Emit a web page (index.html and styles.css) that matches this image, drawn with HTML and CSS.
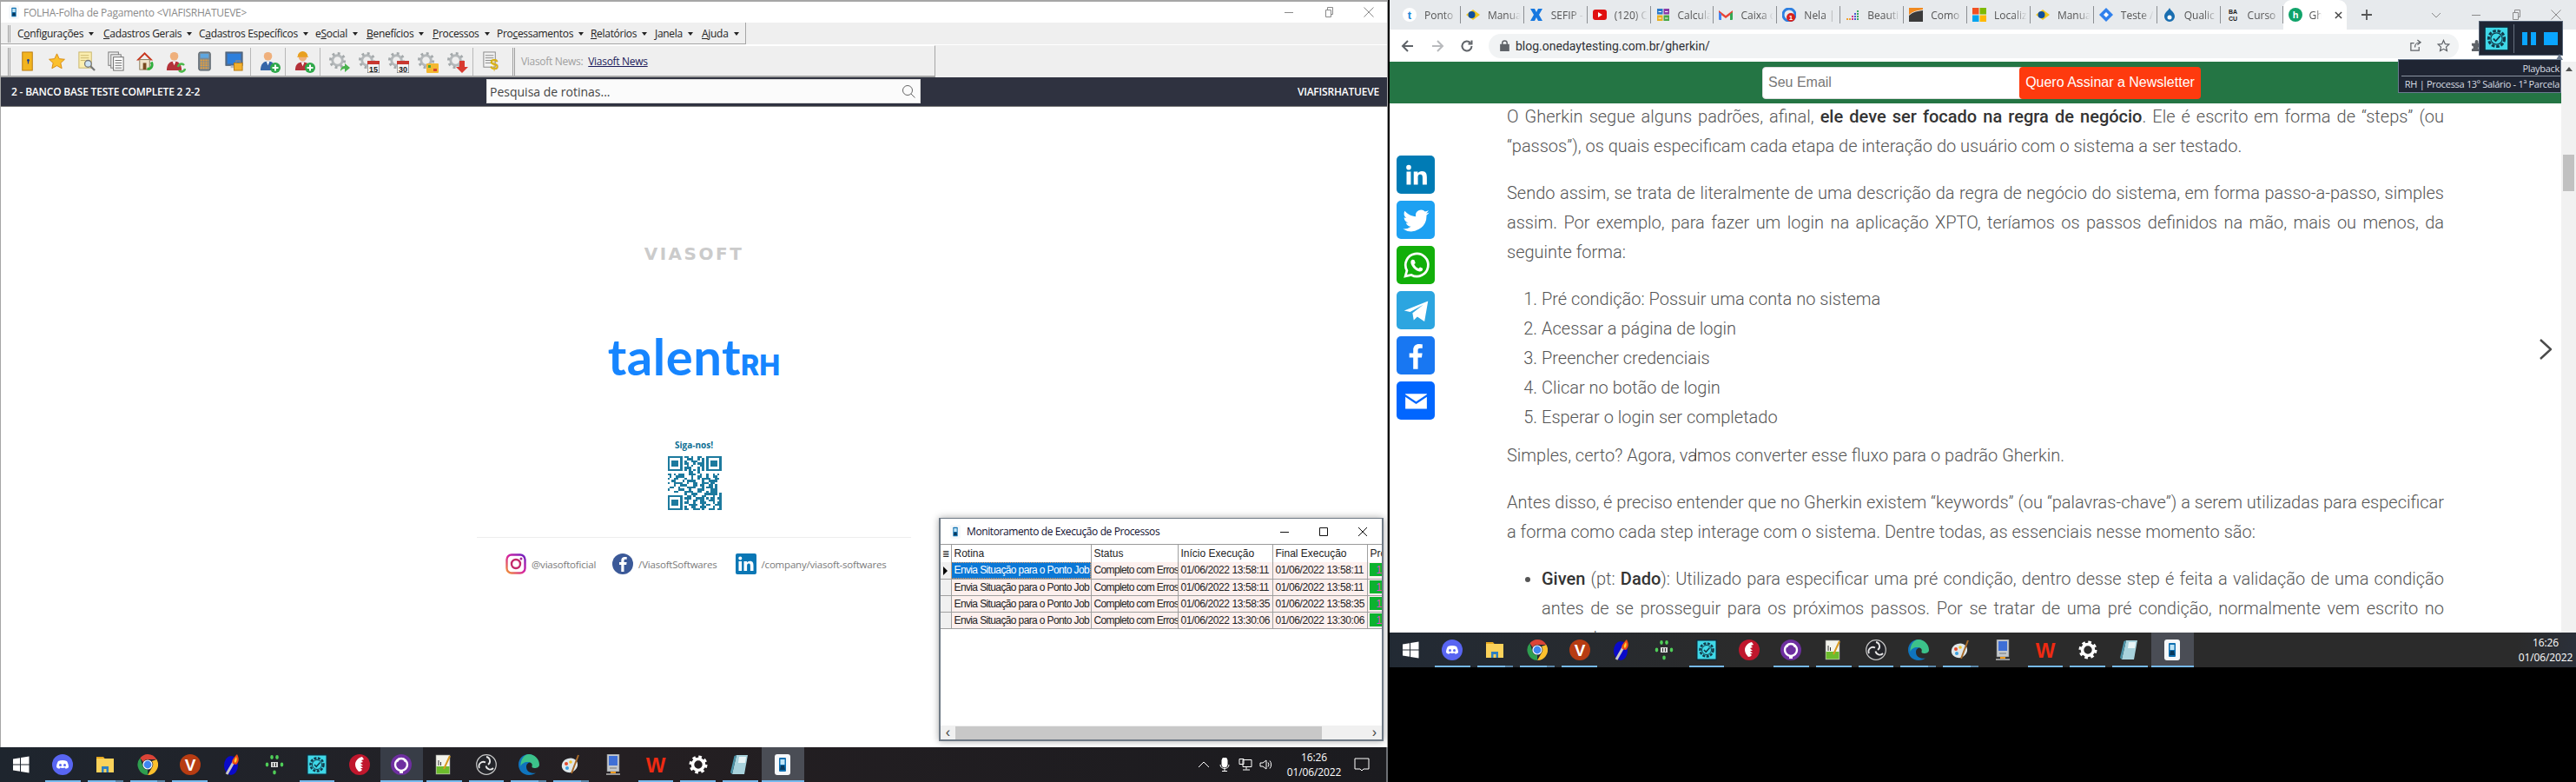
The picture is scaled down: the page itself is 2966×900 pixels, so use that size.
FILE: index.html
```html
<!DOCTYPE html>
<html lang="pt-BR">
<head>
<meta charset="utf-8">
<title>Desktop</title>
<link rel="stylesheet" href="styles.css">
</head>
<body>
<svg class="defs" aria-hidden="true">
  <symbol id="i-win" viewBox="0 0 24 24"><path fill="#fff" d="M3 5.500l8-1.200v7.200H3zM12 4.100l9.500-1.500v8.900H12zM3 12.500h8v7.200l-8-1.200zM12 12.500h9.500v8.900L12 19.900z"/></symbol>
  <symbol id="i-discord" viewBox="0 0 24 24"><circle cx="12" cy="12" r="12" fill="#5865f2"/><path fill="#fff" d="M7 8c3-1.400 7-1.400 10 0 1.400 2.200 2 4.600 2 7-1 1-2.200 1.500-3.400 1.800l-.8-1.300c-1.800.5-3.800.5-5.600 0l-.8 1.300C7.200 16.500 6 16 5 15c0-2.400.6-4.800 2-7z"/><circle cx="9.500" cy="12.500" r="1.500" fill="#5865f2"/><circle cx="14.500" cy="12.500" r="1.500" fill="#5865f2"/></symbol>
  <symbol id="i-folder" viewBox="0 0 24 24"><path fill="#e8a91e" d="M2 3h8l2 2.500H2z"/><rect x="2" y="5" width="20" height="16" fill="#fbd25a"/><path fill="#2e7fc2" d="M8 21v-7h8v7h-2.500v-4h-3v4z"/></symbol>
  <symbol id="i-chrome" viewBox="0 0 24 24"><path fill="#db4437" d="M12 0a12 12 0 0 1 10.400 6H12a6 6 0 0 0-5.200 3L3.400 4.200A12 12 0 0 1 12 0z"/><path fill="#fbc02d" d="M22.400 6A12 12 0 0 1 12 24l5.200-9A6 6 0 0 0 16.800 8z"/><path fill="#2e9e4f" d="M3.400 4.200L6.800 15a6 6 0 0 0 5.200 3l0 6A12 12 0 0 1 3.400 4.200z"/><circle cx="12" cy="12" r="5.600" fill="#fff"/><circle cx="12" cy="12" r="4.400" fill="#3f86f0"/></symbol>
  <symbol id="i-v" viewBox="0 0 24 24"><circle cx="12" cy="12" r="12" fill="#b73c12"/><text x="12" y="19" text-anchor="middle" class="sv-b" font-size="19" fill="#fff">V</text></symbol>
  <symbol id="i-torch" viewBox="0 0 24 24"><ellipse cx="11" cy="13" rx="8" ry="11" fill="#0a0ac8"/><path stroke="#c8c8c8" stroke-width="3" d="M6 23l8-14"/><path fill="#f04a16" d="M13 11c-2-3 0-6 5-11 2 4 3 8-1 12z"/><path fill="#ffd02e" d="M15 9c-1-2 1-4 2-6 1 2 1 5-1 7z"/></symbol>
  <symbol id="i-dots" viewBox="0 0 24 24"><rect x="8" y="9" width="8" height="6" fill="#d8d8d8"/><path fill="#333" d="M10 10h1v4h-1zM13 10h1v4h-1z"/><g fill="#4fce58"><ellipse cx="9" cy="3.500" rx="1.800" ry="2.400"/><ellipse cx="15" cy="3.500" rx="1.800" ry="2.400"/><ellipse cx="3.500" cy="12" rx="1.800" ry="2.400"/><ellipse cx="20.500" cy="12" rx="1.800" ry="2.400"/><ellipse cx="12" cy="21" rx="1.800" ry="2.400"/></g></symbol>
  <symbol id="i-check" viewBox="0 0 24 24"><rect width="24" height="24" fill="#102a38"/><rect x="1.500" y="1.500" width="21" height="21" fill="#3fd8e8"/><circle cx="12" cy="12" r="7.500" fill="none" stroke="#123a4a" stroke-width="2.500" stroke-dasharray="3 1.500"/><circle cx="12" cy="12" r="5.500" fill="none" stroke="#123a4a" stroke-width="1"/><path fill="none" stroke="#123a4a" stroke-width="1.500" d="M9 12l2.200 2.300L15.500 9.500"/></symbol>
  <symbol id="i-delphi" viewBox="0 0 24 24"><circle cx="12" cy="12" r="12" fill="#c0172d"/><path fill="#fff" d="M15 3c-5 1-8 5-8 9 0 3 2 6 4 8 2 0 3-1 4-2l-2-2 3 0-3-3 3 0-3-3 3-1-2-2 3-1z"/></symbol>
  <symbol id="i-git" viewBox="0 0 24 24"><circle cx="12" cy="12" r="12" fill="#6e2fa0"/><circle cx="12" cy="12" r="7" fill="none" stroke="#fff" stroke-width="2.400"/><path fill="#fff" d="M10 18h4v4h-4zM6.500 6l3 1.500-2 2zM17.500 6l-3 1.500 2 2z"/></symbol>
  <symbol id="i-notepad" viewBox="0 0 24 24"><rect x="3" y="1" width="16" height="22" fill="#f4f4ec" stroke="#888" stroke-width=".6"/><rect x="3.500" y="14" width="15" height="8.500" fill="#6cbc2c"/><path stroke="#333" stroke-width="1" d="M6 7v6M8.500 9v4"/><path stroke="#d89a20" stroke-width="2" d="M12 17l7-15"/></symbol>
  <symbol id="i-obs" viewBox="0 0 24 24"><circle cx="12" cy="12" r="11.300" fill="#24252a" stroke="#c8c8c8" stroke-width="1.200"/><g fill="none" stroke="#e8e8e8" stroke-width="1.800"><path d="M12 3a5 5 0 0 1 2 9"/><path d="M20 16a5 5 0 0 1-8.500-2.500"/><path d="M4 16a5 5 0 0 1 7-6.500"/></g></symbol>
  <symbol id="i-edge" viewBox="0 0 24 24"><path fill="#0f74bd" d="M12 0C5 0 0 5.500 0 12s5 12 12 12c3.500 0 6-1 8-2.500-5 1-11-1-11-7 0-3 2-5 5-5H22C21 4 17 0 12 0z"/><path fill="#3cc28a" d="M12 0c6 0 12 5 12 12 0 3-3 4-5.500 4-2 0-3.500-1-3-2 1-3-1-5-5-5-4 0-7 2-8 5C2 6 7 0 12 0z"/></symbol>
  <symbol id="i-paint" viewBox="0 0 24 24"><path fill="#dfe7ea" d="M9 5c6-2 12 2 11 8-1 5-6 9-11 8-5-1-8-5-7-9 .5-3 3-6 7-7z"/><circle cx="7" cy="11" r="2" fill="#e3492c"/><circle cx="8" cy="16" r="2" fill="#3aa0e0"/><circle cx="12" cy="9" r="1.800" fill="#f0c22c"/><path stroke="#a86a28" stroke-width="2" d="M21 1l-8 21"/></symbol>
  <symbol id="i-pc" viewBox="0 0 24 24"><rect x="5" y="0" width="14" height="20" fill="#c4c8cc" stroke="#777" stroke-width=".6"/><rect x="7" y="2" width="10" height="11" fill="#3f6fd6"/><path stroke="#777" d="M8 16h8"/><path fill="#f09a1c" d="M9 20h6v2H9z"/><path stroke="#bbb" stroke-width="1.500" d="M4 23h16"/></symbol>
  <symbol id="i-wps" viewBox="0 0 24 24"><text x="12" y="21" text-anchor="middle" class="sv-b" font-size="24" fill="#ee2a12">W</text></symbol>
  <symbol id="i-set" viewBox="0 0 24 24"><circle cx="12" cy="12" r="6.500" fill="none" stroke="#fff" stroke-width="3.600"/><circle cx="12" cy="12" r="9" fill="none" stroke="#fff" stroke-width="3" stroke-dasharray="3.600 3.470"/></symbol>
  <symbol id="i-book" viewBox="0 0 24 24"><path fill="#a8d2dc" d="M8 1h13l-4 22H3z"/><path fill="#4b93a8" d="M3 23L8 1 5.500 2 1 21z"/><path fill="#e8f4f6" d="M11 3h8l-1 7h-8z"/></symbol>
  <symbol id="i-app" viewBox="0 0 24 24"><rect x="3" width="18" height="24" rx="3" fill="#f6f8fa"/><rect x="8" y="4" width="8" height="16" rx="1" fill="#0e6fb0"/><rect x="9.500" y="6" width="5" height="6" fill="#bfe4f6"/><path fill="#07385c" d="M10 13h4l1 5H9z"/></symbol>
  <symbol id="i-gear" viewBox="0 0 24 24"><circle cx="11" cy="11" r="6" fill="none" stroke="#b4b8ba" stroke-width="3"/><circle cx="11" cy="11" r="8.500" fill="none" stroke="#a4a9ab" stroke-width="3" stroke-dasharray="3 3.670"/><circle cx="11" cy="11" r="2.500" fill="#efefef"/></symbol>
  <symbol id="i-person" viewBox="0 0 24 24"><circle cx="11" cy="6" r="5" fill="#efb07c"/><path fill="#b4323a" d="M2 23c0-8 4-11 9-11s9 3 9 11z"/><path fill="#fff" d="M9 12h4l-2 5z"/></symbol>
  <symbol id="i-person-b" viewBox="0 0 24 24"><circle cx="11" cy="6" r="5" fill="#efb07c"/><path fill="#3566a8" d="M2 23c0-8 4-11 9-11s9 3 9 11z"/><path fill="#fff" d="M9 12h4l-2 5z"/></symbol>
  <symbol id="i-person-h" viewBox="0 0 24 24"><circle cx="11" cy="7" r="5" fill="#efb07c"/><path fill="#e8a020" d="M5 6a6 6 0 0 1 12 0l1 1H4z"/><path fill="#b4323a" d="M2 23c0-8 4-10 9-10s9 2 9 10z"/><path fill="#fff" d="M9 13h4l-2 5z"/></symbol>
</svg>

<div class="screen">
  <section class="left">
    <div class="app">
      <header class="app-title">
        <svg class="ic16"><use href="#i-app"/></svg>
        <span class="app-name">FOLHA-Folha de Pagamento &lt;VIAFISRHATUEVE&gt;</span>
        <div class="win-ctrl">
          <svg class="wc" viewBox="0 0 14 14"><path d="M2 7.500h10"/></svg>
          <svg class="wc" viewBox="0 0 14 14"><path d="M3.500 4.500h6v8h-6zM5.500 4.500v-3h6v8h-2"/></svg>
          <svg class="wc" viewBox="0 0 14 14"><path d="M1.500 1.500l11 11M12.500 1.500l-11 11"/></svg>
        </div>
      </header>
      <nav class="menubar">
        <span class="grip"></span>
        <span class="menu m1">C<u>o</u>nfigurações<i></i></span>
        <span class="menu m2"><u>C</u>adastros Gerais<i></i></span>
        <span class="menu m3">C<u>a</u>dastros Específicos<i></i></span>
        <span class="menu m4">e<u>S</u>ocial<i></i></span>
        <span class="menu m5"><u>B</u>enefícios<i></i></span>
        <span class="menu m6"><u>P</u>rocessos<i></i></span>
        <span class="menu m7">Pro<u>c</u>essamentos<i></i></span>
        <span class="menu m8"><u>R</u>elatórios<i></i></span>
        <span class="menu m9"><u>J</u>anela<i></i></span>
        <span class="menu m10"><u>A</u>juda<i></i></span>
      </nav>
      <div class="toolbar">
        <span class="grip"></span>
        <span class="tb"><svg class="ic24" viewBox="0 0 24 24"><rect x="6" y="1" width="12" height="22" fill="#f2b41e" stroke="#b87a10"/><circle cx="13" cy="11" r="1.500" fill="#1a3f9a"/><path stroke="#1a3f9a" stroke-width="1.200" d="M13 11v4"/></svg></span>
        <span class="tb"><svg class="ic24" viewBox="0 0 24 24"><path fill="#fbc02d" stroke="#d88a10" d="M12 3l2.800 6 6.500.7-4.800 4.400 1.400 6.400L12 17.300 6.100 20.500l1.400-6.400L2.700 9.700 9.200 9z"/></svg></span>
        <span class="tb"><svg class="ic24" viewBox="0 0 24 24"><rect x="3" y="1" width="15" height="19" fill="#fbeeb0" stroke="#c9b56a"/><path stroke="#c9b56a" d="M5 5h10M5 8h10M5 11h6"/><circle cx="14" cy="15" r="4" fill="#cfe4f4" stroke="#777" stroke-width="1.400"/><path stroke="#777" stroke-width="2.400" d="M17 18l5 5"/></svg></span>
        <span class="tb"><svg class="ic24" viewBox="0 0 24 24"><rect x="3" y="1" width="12" height="16" fill="#eee" stroke="#777"/><rect x="6" y="4" width="12" height="16" fill="#eee" stroke="#777"/><rect x="9" y="7" width="12" height="16" fill="#fff" stroke="#666"/><path stroke="#666" d="M11 11h8M11 14h8M11 17h8M11 20h8"/></svg></span>
        <span class="tb"><svg class="ic24" viewBox="0 0 24 24"><path fill="#c8371f" d="M11 1L1 11h3l7-7 7 7h3z"/><rect x="5" y="10" width="12" height="12" fill="#efe4cc" stroke="#8a7a5a"/><rect x="9" y="14" width="4" height="8" fill="#7a4a20"/><path stroke="#2fae3c" stroke-width="3" fill="none" d="M14 21c6 1 7-5 5-8"/></svg></span>
        <span class="tb"><svg class="ic24"><use href="#i-person"/></svg><svg class="ov" viewBox="0 0 12 12"><path fill="none" stroke="#48b848" stroke-width="2.400" d="M2 5a4 4 0 0 1 7-2M10 7a4 4 0 0 1-7 2"/></svg></span>
        <span class="tb"><svg class="ic24" viewBox="0 0 24 24"><rect x="5" y="1" width="14" height="22" rx="2" fill="#7d8a94" stroke="#4c565c"/><rect x="7" y="3" width="10" height="5" fill="#5fa6df"/><path stroke="#f0a030" stroke-width="2" stroke-dasharray="2 1" d="M7 11h10M7 14h10M7 17h10M7 20h10"/></svg></span>
        <span class="tb"><svg class="ic24" viewBox="0 0 24 24"><rect x="2" y="1" width="20" height="16" fill="#4d6f9c" stroke="#4c5c6c"/><rect x="4" y="3" width="16" height="12" fill="#2d7fdc"/><path fill="#bbb" d="M8 17h6v3H8z"/><rect x="12" y="14" width="10" height="9" fill="#f2b02c" stroke="#b87a10"/><path fill="none" stroke="#888" stroke-width="1.500" d="M14.500 14v-2.500h5V14"/></svg></span>
        <span class="tsep"></span>
        <span class="tb"><svg class="ic24"><use href="#i-person-b"/></svg><svg class="ov" viewBox="0 0 12 12"><circle cx="6" cy="6" r="6" fill="#2ea84a"/><path stroke="#fff" stroke-width="2" d="M6 2.500v7M2.500 6h7"/></svg></span>
        <span class="tsep"></span>
        <span class="tb"><svg class="ic24"><use href="#i-person-h"/></svg><svg class="ov" viewBox="0 0 12 12"><circle cx="6" cy="6" r="6" fill="#2ea84a"/><path stroke="#fff" stroke-width="2" d="M6 2.500v7M2.500 6h7"/></svg></span>
        <span class="tsep"></span>
        <span class="tb"><svg class="ic24"><use href="#i-gear"/></svg><svg class="ov" viewBox="0 0 12 12"><path fill="#49b24d" d="M1 10c0-5 3-6 5-6V1l6 5-6 5V7c-2 0-4 1-5 3z"/></svg></span>
        <span class="tb"><svg class="ic24"><use href="#i-gear"/></svg><svg class="ov cal" viewBox="0 0 14 14"><rect width="14" height="14" fill="#f4f4f4" stroke="#555"/><rect width="14" height="4" fill="#c8372f"/><text x="7" y="13" text-anchor="middle" class="sv-b" font-size="9" fill="#222">15</text></svg></span>
        <span class="tb"><svg class="ic24"><use href="#i-gear"/></svg><svg class="ov cal" viewBox="0 0 14 14"><rect width="14" height="14" fill="#f4f4f4" stroke="#555"/><rect width="14" height="4" fill="#c8372f"/><text x="7" y="13" text-anchor="middle" class="sv-b" font-size="9" fill="#222">30</text></svg></span>
        <span class="tb"><svg class="ic24"><use href="#i-gear"/></svg><svg class="ov cal" viewBox="0 0 14 14"><rect y="3" width="14" height="11" rx="1" fill="#f4b830"/><path fill="#4aa83a" d="M2 5h3v3H2z"/><path fill="#d8452c" d="M8 9h4v3H8z"/></svg></span>
        <span class="tb"><svg class="ic24"><use href="#i-gear"/></svg><svg class="ov cal" viewBox="0 0 14 14"><path fill="#d83a30" d="M4 0h6v7h4l-7 7-7-7h4z"/></svg></span>
        <span class="tsep"></span>
        <span class="tb"><svg class="ic24" viewBox="0 0 24 24"><rect x="3" y="1" width="14" height="18" fill="#f2f2f2" stroke="#888"/><path stroke="#888" d="M5 5h10M5 8h10M5 11h8M5 14h8"/><text x="16" y="22" text-anchor="middle" class="sv-b" font-size="18" fill="#d8b012">$</text></svg></span>
        <span class="grip g2"></span>
        <span class="news">Viasoft News:</span>
        <a class="news-link">Viasoft News</a>
      </div>
      <div class="darkbar">
        <strong class="base">2 - BANCO BASE TESTE COMPLETE 2 2-2</strong>
        <div class="search"><span>Pesquisa de rotinas...</span><svg class="lens" viewBox="0 0 16 16"><circle cx="7" cy="7" r="5.500"/><path d="M11 11l4.500 4.500"/></svg></div>
        <strong class="user">VIAFISRHATUEVE</strong>
      </div>
      <main class="home">
        <div class="viasoft">VIASOFT</div>
        <div class="talent">talent<b>RH</b></div>
        <div class="siga">Siga-nos!</div>
        <svg class="qr" viewBox="0 0 25 25" shape-rendering="crispEdges">
          <path class="qf" fill-rule="evenodd" d="M0 0h7v7H0zM1 1v5h5V1zM2 2h3v3H2zM18 0h7v7h-7zM19 1v5h5V1zM20 2h3v3h-3zM0 18h7v7H0zM1 19v5h5v-5zM2 20h3v3H2z"/>
          <path class="qd" d="M8 .5h2m1 0h1m2 0h2M9 1.500h3m2 0h1m1 0h1M8 2.500h1m2 0h3m2 0h1M8 3.500h2m2 0h1m1 0h3M9 4.500h1m1 0h1m3 0h2M8 5.500h3m3 0h1m1 0h1M8 6.500h1m1 0h1m1 0h1m1 0h1m1 0h1M10 7.500h2m2 0h1M0 8.500h2m1 0h1m1 0h3m2 0h3m2 0h1m2 0h1m2 0h1m1 0h1M1 9.500h1m2 0h4m3 0h1m2 0h2m2 0h1m2 0h2M0 10.500h1m2 0h2m3 0h1m2 0h1m2 0h1m1 0h4m2 0h2M2 11.500h2m3 0h1m1 0h4m3 0h1m2 0h4M0 12.500h1m2 0h4m2 0h1m2 0h2m2 0h3m1 0h2M3 13.500h1m2 0h3m3 0h2m1 0h2m2 0h2m1 0h1M1 14.500h2m2 0h1m3 0h4m3 0h1m1 0h3m1 0h1M0 15.500h1m4 0h3m2 0h1m3 0h3m3 0h3M3 16.500h2m3 0h4m2 0h2m2 0h1m1 0h3M8 17.500h1m2 0h3m3 0h6m1 0h1M9 18.500h2m1 0h1m3 0h2m3 0h1m2 0h1M8 19.500h3m2 0h4m1 0h1m1 0h2m1 0h2M9 20.500h1m2 0h2m1 0h2m2 0h3m2 0h1M8 21.500h2m2 0h1m2 0h3m3 0h1m1 0h2M10 22.500h4m2 0h1m1 0h2m2 0h3M8 23.500h1m2 0h2m2 0h3m3 0h1m2 0h1M8 24.500h2m2 0h3m1 0h1m2 0h3m1 0h2"/>
        </svg>
        <hr class="rule">
        <div class="socials">
          <span class="soc s1"><svg class="ic24" viewBox="0 0 24 24"><defs><linearGradient id="ig" x1="0" y1="1" x2="1" y2="0"><stop offset="0" stop-color="#f09433"/><stop offset=".5" stop-color="#d6249f"/><stop offset="1" stop-color="#6a1fc0"/></linearGradient></defs><rect x="1.500" y="1.500" width="21" height="21" rx="5.500" fill="none" stroke="url(#ig)" stroke-width="2.400"/><circle cx="12" cy="12" r="5" fill="none" stroke="#c32a6a" stroke-width="2.400"/><circle cx="18" cy="6" r="1.500" fill="#a3279a"/></svg>@viasoftoficial</span>
          <span class="soc s2"><svg class="ic24" viewBox="0 0 24 24"><circle cx="12" cy="12" r="12" fill="#3b5998"/><path fill="#fff" d="M13.500 21v-8h2.700l.4-3h-3.100V8.200c0-.9.3-1.500 1.500-1.500h1.700V4c-.3 0-1.300-.1-2.400-.1-2.400 0-4 1.400-4 4.100V10H8v3h2.300v8z"/></svg>/ViasoftSoftwares</span>
          <span class="soc s3"><svg class="ic24" viewBox="0 0 24 24"><rect width="24" height="24" rx="2" fill="#0a77b5"/><path fill="#fff" d="M3.500 9h3.600v11H3.500zM5.300 3.500a2 2 0 1 1 0 4.100 2 2 0 0 1 0-4.100zM9.500 9H13v1.500c.6-1 1.800-1.800 3.500-1.800 3.400 0 4 2.200 4 5.200V20h-3.600v-5.500c0-1.300 0-3-1.800-3s-2 1.400-2 2.900V20H9.500z"/></svg>/company/viasoft-softwares</span>
        </div>
      </main>
      <div class="dialog">
        <div class="dlg-title">
          <svg class="ic16"><use href="#i-app"/></svg>
          <span class="dlg-name">Monitoramento de Execução de Processos</span>
          <div class="dlg-ctrl">
            <svg class="wc2" viewBox="0 0 14 14"><path d="M2 7.500h10"/></svg>
            <svg class="wc2" viewBox="0 0 14 14"><path d="M2.500 2.500h9v9h-9z"/></svg>
            <svg class="wc2" viewBox="0 0 14 14"><path d="M2 2l10 10M12 2L2 12"/></svg>
          </div>
        </div>
        <div class="grid-wrap">
          <table class="grid">
            <colgroup><col class="c0"><col class="c1"><col class="c2"><col class="c3"><col class="c4"><col></colgroup>
            <thead><tr><th class="ind">≣</th><th>Rotina</th><th>Status</th><th>Início Execução</th><th>Final Execução</th><th>Pro</th></tr></thead>
            <tbody>
              <tr><td class="ind"><span class="arrow"></span></td><td class="sel">Envia Situação para o Ponto Job</td><td>Completo com Erros</td><td>01/06/2022 13:58:11</td><td>01/06/2022 13:58:11</td><td class="pg">1</td></tr>
              <tr><td class="ind"></td><td>Envia Situação para o Ponto Job</td><td>Completo com Erros</td><td>01/06/2022 13:58:11</td><td>01/06/2022 13:58:11</td><td class="pg">1</td></tr>
              <tr><td class="ind"></td><td>Envia Situação para o Ponto Job</td><td>Completo com Erros</td><td>01/06/2022 13:58:35</td><td>01/06/2022 13:58:35</td><td class="pg">1</td></tr>
              <tr><td class="ind"></td><td>Envia Situação para o Ponto Job</td><td>Completo com Erros</td><td>01/06/2022 13:30:06</td><td>01/06/2022 13:30:06</td><td class="pg">1</td></tr>
            </tbody>
          </table>
          <div class="hscroll"><span class="ha">‹</span><span class="hthumb"></span><span class="ha">›</span></div>
        </div>
      </div>
    </div>
    <footer class="taskbar tb-left">
      <span class="start"><svg class="ti"><use href="#i-win"/></svg></span>
      <span class="tk run"><svg class="ti"><use href="#i-discord"/></svg></span>
      <span class="tk run split"><svg class="ti"><use href="#i-folder"/></svg></span>
      <span class="tk run split"><svg class="ti"><use href="#i-chrome"/></svg></span>
      <span class="tk run"><svg class="ti"><use href="#i-v"/></svg></span>
      <span class="tk"><svg class="ti"><use href="#i-torch"/></svg></span>
      <span class="tk"><svg class="ti"><use href="#i-dots"/></svg></span>
      <span class="tk run"><svg class="ti"><use href="#i-check"/></svg></span>
      <span class="tk"><svg class="ti"><use href="#i-delphi"/></svg></span>
      <span class="tk run hot"><svg class="ti"><use href="#i-git"/></svg></span>
      <span class="tk run"><svg class="ti"><use href="#i-notepad"/></svg></span>
      <span class="tk run"><svg class="ti"><use href="#i-obs"/></svg></span>
      <span class="tk run split"><svg class="ti"><use href="#i-edge"/></svg></span>
      <span class="tk run split"><svg class="ti"><use href="#i-paint"/></svg></span>
      <span class="tk"><svg class="ti"><use href="#i-pc"/></svg></span>
      <span class="tk run"><svg class="ti"><use href="#i-wps"/></svg></span>
      <span class="tk run"><svg class="ti"><use href="#i-set"/></svg></span>
      <span class="tk run"><svg class="ti"><use href="#i-book"/></svg></span>
      <span class="tk run active"><svg class="ti"><use href="#i-app"/></svg></span>
      <div class="tray">
        <svg class="tr-ic" viewBox="0 0 16 16"><path d="M2 11l6-6 6 6"/></svg>
        <svg class="tr-ic" viewBox="0 0 16 16"><rect class="solid" x="5" y="0" width="6" height="11" rx="3"/><path d="M3 8c0 6 10 6 10 0M8 13v3M5 15.500h6"/></svg>
        <svg class="tr-ic" viewBox="0 0 16 16"><path d="M5 2.500h10v8H5zM1 1.500h5v6H1zM9 10.500v3M5 14h8"/></svg>
        <svg class="tr-ic" viewBox="0 0 16 16"><path d="M1 6h3l4-3v10l-4-3H1zM10 5.500a4 4 0 0 1 0 5M12 3.500a7 7 0 0 1 0 9"/></svg>
        <div class="clock"><span>16:26</span><span>01/06/2022</span></div>
        <svg class="tr-note" viewBox="0 0 18 18"><path d="M1 2h16v12h-6l-2 2-2-2H1z"/></svg>
        <span class="tr-end"></span>
      </div>
    </footer>
  </section>

  <section class="right">
    <div class="browser">
      <div class="tabstrip">
        <span class="tab"><svg class="fav" viewBox="0 0 16 16"><circle cx="8" cy="8" r="8" fill="#fff"/><text x="8" y="13" text-anchor="middle" class="sv-b" font-size="13" fill="#1e88d8">t</text></svg><span class="tname">Ponto</span></span>
        <span class="tab"><svg class="fav" viewBox="0 0 16 16"><path fill="#f2c81e" d="M0 8l8-6 8 6-8 6z"/><circle cx="6.500" cy="8" r="4" fill="#10509c"/></svg><span class="tname">Manual</span></span>
        <span class="tab"><svg class="fav" viewBox="0 0 16 16"><path fill="#1778e0" d="M1 1h5l2 4 2-4h5l-4 7 4 7h-5l-2-4-2 4H1l4-7z"/></svg><span class="tname">SEFIP -</span></span>
        <span class="tab"><svg class="fav" viewBox="0 0 16 16"><rect y="2" width="16" height="12" rx="3" fill="#e01010"/><path fill="#fff" d="M6 5l5 3-5 3z"/></svg><span class="tname">(120) C</span></span>
        <span class="tab"><svg class="fav" viewBox="0 0 16 16"><rect x="1" y="1" width="6.500" height="6.500" fill="#2a78c8"/><rect x="8.500" y="1" width="6.500" height="6.500" fill="#8a3aa8"/><rect x="1" y="8.500" width="6.500" height="6.500" fill="#e8b020"/><rect x="8.500" y="8.500" width="6.500" height="6.500" fill="#48a848"/><path stroke="#fff" d="M2.500 4.500h3.500M10 4.500h3.500M2.500 12h3.500M10 12h3.500"/></svg><span class="tname">Calcula</span></span>
        <span class="tab"><svg class="fav" viewBox="0 0 16 16"><path fill="#ea4335" d="M0 3l8 6 8-6v3l-8 6-8-6z"/><path fill="#4285f4" d="M0 5l3 2v7H1a1 1 0 0 1-1-1z"/><path fill="#34a853" d="M16 5l-3 2v7h2a1 1 0 0 0 1-1z"/></svg><span class="tname">Caixa c</span></span>
        <span class="tab"><svg class="fav" viewBox="0 0 16 16"><circle cx="8" cy="8" r="7" fill="none" stroke="#2e7fe0" stroke-width="3"/><circle cx="10" cy="11" r="5" fill="#d8201c"/><text x="10" y="14" text-anchor="middle" class="sv-b" font-size="8" fill="#fff">1</text></svg><span class="tname">Nela |</span></span>
        <span class="tab"><svg class="fav" viewBox="0 0 16 16"><path stroke-width="2" stroke="#f0a030" d="M1 13h2M4 13h2"/><path stroke-width="2" stroke="#c83a8a" d="M7 13h2M7 10h2"/><path stroke-width="2" stroke="#4a5ad0" d="M10 13h2M10 10h2M10 7h2"/><path stroke-width="2" stroke="#38a860" d="M13 13h2M13 10h2M13 7h2M13 4h2"/></svg><span class="tname">Beauti</span></span>
        <span class="tab"><svg class="fav" viewBox="0 0 16 16"><path fill="#3a3a3a" d="M0 16V9c3-3 7-5 16-6v13z"/><path fill="#f08a20" d="M0 0h16v2C8 3 3 5 0 8z"/></svg><span class="tname">Como</span></span>
        <span class="tab"><svg class="fav" viewBox="0 0 16 16"><rect width="7.500" height="7.500" fill="#f25022"/><rect x="8.500" width="7.500" height="7.500" fill="#7fba00"/><rect y="8.500" width="7.500" height="7.500" fill="#00a4ef"/><rect x="8.500" y="8.500" width="7.500" height="7.500" fill="#ffb900"/></svg><span class="tname">Localiz</span></span>
        <span class="tab"><svg class="fav" viewBox="0 0 16 16"><path fill="#f2c81e" d="M0 8l8-6 8 6-8 6z"/><circle cx="6.500" cy="8" r="4" fill="#10509c"/></svg><span class="tname">Manual</span></span>
        <span class="tab"><svg class="fav" viewBox="0 0 16 16"><path fill="#2f80ed" d="M8 0l8 8-8 8-8-8z"/><path fill="#fff" d="M8 5l3 3-3 3-3-3z"/></svg><span class="tname">Teste /</span></span>
        <span class="tab"><svg class="fav" viewBox="0 0 16 16"><path fill="#1a6eb0" d="M8 0c1 3 6 5 6 10a6 6 0 0 1-12 0C2 5 7 3 8 0z"/><circle cx="8" cy="11" r="2.500" fill="#fff"/></svg><span class="tname">Qualic</span></span>
        <span class="tab"><svg class="fav" viewBox="0 0 16 16"><rect width="16" height="16" fill="#e8ebee"/><text x="8" y="7" text-anchor="middle" class="sv-b" font-size="7" fill="#222">BA</text><text x="8" y="15" text-anchor="middle" class="sv-b" font-size="7" fill="#222">CU</text></svg><span class="tname">Curso</span></span>
        <span class="tab tab-on"><svg class="fav" viewBox="0 0 16 16"><circle cx="8" cy="8" r="8" fill="#10a36a"/><text x="8" y="12" text-anchor="middle" class="sv-b" font-size="11" fill="#fff">h</text></svg><span class="tname">Gherkin</span><svg class="tx" viewBox="0 0 10 10"><path d="M1 1l8 8M9 1L1 9"/></svg></span>
        <svg class="tplus" viewBox="0 0 14 14"><path d="M7 1v12M1 7h12"/></svg>
        <div class="chrome-ctrl">
          <svg class="wc" viewBox="0 0 14 14"><path d="M2 5l5 5 5-5"/></svg>
          <svg class="wc" viewBox="0 0 14 14"><path d="M2 7.500h10"/></svg>
          <svg class="wc" viewBox="0 0 14 14"><path d="M3.500 4.500h6v8h-6zM5.500 4.500v-3h6v8h-2"/></svg>
          <svg class="wc" viewBox="0 0 14 14"><path d="M1.500 1.500l11 11M12.500 1.500l-11 11"/></svg>
        </div>
      </div>
      <div class="navbar">
        <svg class="nav-ic" viewBox="0 0 16 16"><path d="M14 8H2M8 2L2 8l6 6"/></svg>
        <svg class="nav-ic off" viewBox="0 0 16 16"><path d="M2 8h12M8 2l6 6-6 6"/></svg>
        <svg class="nav-ic" viewBox="0 0 16 16"><path d="M13.500 8a5.500 5.500 0 1 1-1.600-3.900M13.500 1.500v4h-4"/></svg>
        <div class="omni">
          <svg class="lock" viewBox="0 0 12 14"><path class="solid" d="M1 6h10v8H1z"/><path d="M3 6V4a3 3 0 0 1 6 0v2"/></svg>
          <span class="url">blog.onedaytesting.com.br/gherkin/</span>
          <svg class="omni-ic" viewBox="0 0 16 16"><path d="M12 9.500V14H2V5h4M7 10c0-4 3-6 6-6M10 1l4 3-4 3"/></svg>
          <svg class="omni-ic" viewBox="0 0 16 16"><path d="M8 1.500l2 4.500 4.700.5-3.500 3.200 1 4.800L8 12.100l-4.200 2.400 1-4.800L1.300 6.500 6 6z"/></svg>
        </div>
        <svg class="puzzle" viewBox="0 0 16 16"><path d="M1 5h4V3a2 2 0 0 1 4 0v2h4v4h-2a2 2 0 0 0 0 4h2v2H1v-3a2 2 0 0 0 0-4z"/></svg>
      </div>
      <div class="page">
        <div class="newsletter">
          <input class="nl-input" placeholder="Seu Email" aria-label="Seu Email">
          <button class="nl-btn">Quero Assinar a Newsletter</button>
        </div>
        <article class="article">
          <p>O Gherkin segue alguns padrões, afinal, <b>ele deve ser focado na regra de negócio</b>. Ele é escrito em forma de “steps” (ou “passos”), os quais especificam cada etapa de interação do usuário com o sistema a ser testado.</p>
          <p>Sendo assim, se trata de literalmente de uma descrição da regra de negócio do sistema, em forma passo-a-passo, simples assim. Por exemplo, para fazer um login na aplicação XPTO, teríamos os passos definidos na mão, mais ou menos, da seguinte forma:</p>
          <ol>
            <li>Pré condição: Possuir uma conta no sistema</li>
            <li>Acessar a página de login</li>
            <li>Preencher credenciais</li>
            <li>Clicar no botão de login</li>
            <li>Esperar o login ser completado</li>
          </ol>
          <p>Simples, certo? Agora, vamos converter esse fluxo para o padrão Gherkin.</p>
          <p>Antes disso, é preciso entender que no Gherkin existem “keywords” (ou “palavras-chave”) a serem utilizadas para especificar a forma como cada step interage com o sistema. Dentre todas, as essenciais nesse momento são:</p>
          <ul>
            <li><b>Given</b> (pt: <b>Dado</b>): Utilizado para especificar uma pré condição, dentro desse step é feita a validação de uma condição antes de se prosseguir para os próximos passos. Por se tratar de uma pré condição, normalmente vem escrito no passado.</li>
          </ul>
        </article>
        <div class="share">
          <span class="sb b-in"><svg viewBox="0 0 24 24"><path d="M4 9h3.600v11H4zM5.800 3.500a2 2 0 1 1 0 4.100 2 2 0 0 1 0-4.100zM10 9h3.400v1.500c.6-1 1.800-1.800 3.500-1.800 3.400 0 4.100 2.200 4.100 5.200V20h-3.600v-5.500c0-1.300 0-3-1.900-3s-2 1.400-2 2.900V20H10z"/></svg></span>
          <span class="sb b-tw"><svg viewBox="0 0 24 24"><path d="M23 5.500c-.8.400-1.700.600-2.600.7.900-.6 1.600-1.400 2-2.500-.9.500-1.800.900-2.900 1.100a4.500 4.500 0 0 0-7.700 4.100C8 8.700 4.700 6.900 2.500 4.200c-1.200 2.100-.6 4.700 1.400 6-.7 0-1.400-.2-2-.6 0 2.200 1.500 4.100 3.600 4.500-.7.200-1.400.2-2 .1.600 1.800 2.200 3.100 4.200 3.100A9 9 0 0 1 1 19.200 12.800 12.800 0 0 0 20.700 7.800c.9-.6 1.700-1.400 2.300-2.300z"/></svg></span>
          <span class="sb b-wa"><svg viewBox="0 0 24 24"><path fill="none" stroke="#fff" stroke-width="2" d="M3 21l1.300-4.700A9.500 9.500 0 1 1 8 20z"/><path d="M9 7c-.5 0-1.500.8-1.500 2.300S8.700 13 10 14.300s3.200 2.500 4.800 2.700 2.700-1 2.800-1.800l-.2-.8-2-1c-.4 0-1 1-1.300 1.200-1.600-.5-3-2-3.700-3.500.3-.4 1-.9 1-1.300l-.9-2.300z"/></svg></span>
          <span class="sb b-tg"><svg viewBox="0 0 24 24"><path d="M2 12L22 4l-3 17-6-4-3 3-1-6 9-7-11 6z"/></svg></span>
          <span class="sb b-fb"><svg viewBox="0 0 24 24"><path d="M13.500 23V13.500h3.200l.5-3.700h-3.700V7.500c0-1.100.3-1.800 1.800-1.800h2V2.300c-.4 0-1.500-.2-2.900-.2-2.900 0-4.800 1.800-4.800 5v2.700H6.300v3.700h3.300V23z"/></svg></span>
          <span class="sb b-ml"><svg viewBox="0 0 24 24"><path d="M3 6h18v.5l-9 6-9-6zM3 8.500l9 6 9-6V18.500H3z"/></svg></span>
        </div>
        <svg class="next" viewBox="0 0 14 24"><path d="M1 1l12 11L1 23"/></svg>
        <span class="ibeam"></span>
        <div class="vscroll"><span class="vup"></span><span class="vthumb"></span></div>
      </div>
      <div class="recorder">
        <svg class="rec-logo"><use href="#i-check"/></svg>
        <span class="rec-sep"></span>
        <span class="rec-pause"></span>
        <span class="rec-stop"></span>
      </div>
      <div class="rec-tip">
        <span class="tip-head">Playback</span>
        <span class="tip-body">RH | Processa 13º Salário - 1ª Parcela</span>
      </div>
    </div>
    <footer class="taskbar tb-right">
      <span class="start"><svg class="ti"><use href="#i-win"/></svg></span>
      <span class="tk run"><svg class="ti"><use href="#i-discord"/></svg></span>
      <span class="tk run split"><svg class="ti"><use href="#i-folder"/></svg></span>
      <span class="tk run split"><svg class="ti"><use href="#i-chrome"/></svg></span>
      <span class="tk run"><svg class="ti"><use href="#i-v"/></svg></span>
      <span class="tk"><svg class="ti"><use href="#i-torch"/></svg></span>
      <span class="tk"><svg class="ti"><use href="#i-dots"/></svg></span>
      <span class="tk run"><svg class="ti"><use href="#i-check"/></svg></span>
      <span class="tk"><svg class="ti"><use href="#i-delphi"/></svg></span>
      <span class="tk run"><svg class="ti"><use href="#i-git"/></svg></span>
      <span class="tk run"><svg class="ti"><use href="#i-notepad"/></svg></span>
      <span class="tk run"><svg class="ti"><use href="#i-obs"/></svg></span>
      <span class="tk run split"><svg class="ti"><use href="#i-edge"/></svg></span>
      <span class="tk run split"><svg class="ti"><use href="#i-paint"/></svg></span>
      <span class="tk"><svg class="ti"><use href="#i-pc"/></svg></span>
      <span class="tk run"><svg class="ti"><use href="#i-wps"/></svg></span>
      <span class="tk run"><svg class="ti"><use href="#i-set"/></svg></span>
      <span class="tk run"><svg class="ti"><use href="#i-book"/></svg></span>
      <span class="tk run active"><svg class="ti"><use href="#i-app"/></svg></span>
      <div class="tray">
        <div class="clock"><span>16:26</span><span>01/06/2022</span></div>
      </div>
    </footer>
  </section>
</div>
</body>
</html>
```

FILE: styles.css
```css
* { box-sizing: border-box; }
html, body { margin: 0; padding: 0; background: #000; }
.defs { position: absolute; width: 0; height: 0; }
.sv-b { font-family: "Liberation Sans", sans-serif; font-weight: 700; }
.screen { display: flex; width: 2966px; height: 900px; overflow: hidden; font-family: "Open Sans", "Liberation Sans", sans-serif; }

/* left window */
.left { width: 1600px; display: flex; flex-direction: column; }
.app { position: relative; height: 860px; width: 1598px; background: #fff; border-top: 2px solid #a6a6a6; border-left: 1px solid #a6a6a6; border-right: 1px solid #a6a6a6; display: flex; flex-direction: column; }
.app-title { height: 24px; display: flex; align-items: center; padding-left: 7px; flex: none; }
.ic16 { width: 16px; height: 16px; flex: none; }
.app-name { margin-left: 3px; font-size: 12px; letter-spacing: -.25px; color: #8a8a8a; }
.win-ctrl { margin-left: auto; display: flex; gap: 32px; padding-right: 14px; }
.wc { width: 14px; height: 14px; fill: none; stroke: #8a8a8a; stroke-width: 1; }
.menubar { height: 25px; background: #efefef; display: flex; align-items: center; font-size: 12px; letter-spacing: -.3px; color: #222; flex: none; position: relative; }
.menubar::after { content: ""; position: absolute; left: 0; top: 0; bottom: 0; width: 857px; border-right: 1px solid #a6a6a6; border-bottom: 1px solid #a6a6a6; pointer-events: none; }
.grip { width: 3px; height: 20px; margin-left: 8px; border-left: 1px solid #a0a0a0; border-right: 1px solid #a0a0a0; flex: none; }
.menu { display: inline-flex; align-items: center; white-space: nowrap; }
.menu i { width: 0; height: 0; margin-left: 6px; border: 3px solid transparent; border-top: 4px solid #222; border-bottom: 0; }
.m1 { margin-left: 8px; width: 99px; }
.m2 { width: 110px; }
.m3 { width: 134px; }
.m4 { width: 59px; }
.m5 { width: 76px; }
.m6 { width: 74px; }
.m7 { width: 108px; }
.m8 { width: 74px; }
.m9 { width: 54px; }
.toolbar { height: 37px; margin-top: 1px; background: #efefef; display: flex; align-items: center; flex: none; position: relative; font-size: 13px; }
.toolbar::after { content: ""; position: absolute; left: 0; top: 0; bottom: 0; width: 1075px; border-right: 1px solid #a6a6a6; border-bottom: 2px solid #a6a6a6; border-top: 1px solid #fff; pointer-events: none; }
.toolbar > .grip { height: 32px; }
.toolbar > .grip:first-child { margin-right: 2px; }
.tb { width: 34px; height: 32px; display: flex; align-items: center; justify-content: center; position: relative; flex: none; }
.ic24 { width: 24px; height: 24px; flex: none; }
.tb .ic24 { width: 23px; height: 23px; }
.ov { position: absolute; right: 3px; bottom: 3px; width: 12px; height: 12px; }
.ov.cal { width: 14px; height: 14px; }
.tsep { width: 1px; height: 32px; background: #b8b8b8; margin: 0 3px 0 2px; flex: none; }
.g2 { margin-left: 8px; }
.news { margin-left: 7px; color: #a0a0a0; font-size: 12px; letter-spacing: -.3px; }
.news-link { margin-left: 6px; color: #1a1a5a; text-decoration: underline; font-size: 12px; letter-spacing: -.3px; }
.darkbar { height: 34px; background: #2f3240; display: flex; align-items: center; color: #fff; flex: none; padding: 0 9px 0 12px; border-bottom: 1px solid #777; }
.base { font-size: 12px; font-weight: 600; letter-spacing: -.2px; }
.search { position: absolute; left: 559px; top: 89px; width: 500px; height: 28px; background: #fbfbfb; display: flex; align-items: center; justify-content: space-between; padding: 0 5px 0 3px; font-size: 14px; color: #444; border: 1px solid #ddd; }
.lens { width: 16px; height: 16px; fill: none; stroke: #666; stroke-width: 1; }
.user { margin-left: auto; font-size: 12px; font-weight: 600; letter-spacing: -.2px; }
.home { flex: 1; display: flex; flex-direction: column; align-items: center; }
.viasoft { margin-top: 158px; width: 120px; height: 22px; text-align: center; font: 700 20px/22px "DejaVu Sans", sans-serif; letter-spacing: 2.5px; color: #cbcbcb; white-space: nowrap; display: flex; justify-content: center; }
.talent { margin-top: 74px; height: 66px; font: 700 58px/66px Lato, sans-serif; color: #1685ff; letter-spacing: .5px; white-space: nowrap; }
.talent b { font: 800 32px/32px Inter, sans-serif; letter-spacing: 0; }
.siga { margin-top: 62px; font-size: 10px; line-height: 14px; font-weight: 700; color: #0e6f93; }
.qr { width: 63px; height: 62px; margin-top: 6px; }
.qf { fill: #1d7a9e; }
.qd { fill: none; stroke: #1d7a9e; stroke-width: 1; }
.rule { width: 500px; margin: 31px 0 0; border: 0; border-top: 1px solid #eee; }
.socials { margin-top: 18px; width: 500px; display: flex; font-size: 11.5px; color: #7a7a7a; letter-spacing: -.2px; white-space: nowrap; }
.soc { display: inline-flex; align-items: center; gap: 6px; }
.s1 { margin-left: 33px; }
.s2 { margin-left: 19px; }
.s3 { margin-left: 21px; }

/* dialog */
.dialog { position: absolute; left: 1080px; top: 594px; width: 512px; height: 257px; background: #fff; border: 2px solid #6f7a86; border-top-width: 1px; box-shadow: 0 0 8px rgba(0,0,0,.35); display: flex; flex-direction: column; font: 12px "Liberation Sans", sans-serif; color: #222; }
.dlg-title { height: 30px; display: flex; align-items: center; padding-left: 9px; flex: none; border-bottom: 1px solid #9a9a9a; }
.dlg-name { margin-left: 5px; font: 12px "Open Sans", sans-serif; letter-spacing: -.4px; color: #101030; }
.dlg-ctrl { margin-left: auto; display: flex; gap: 31px; padding-right: 15px; }
.wc2 { width: 14px; height: 14px; fill: none; stroke: #111; stroke-width: 1; }
.grid-wrap { flex: 1; display: flex; flex-direction: column; position: relative; overflow: hidden; }
.grid { border-collapse: collapse; table-layout: fixed; width: 510px; }
.c0 { width: 12px; }
.c1 { width: 161px; }
.c2 { width: 100px; }
.c3 { width: 109px; }
.c4 { width: 109px; }
.grid th, .grid td { height: 19px; padding: 0 3px; text-align: left; font-weight: 400; white-space: nowrap; overflow: hidden; border-right: 1px solid #a0a0a0; border-bottom: 1px solid #a0a0a0; background: #fdf0ee; }
.grid td:nth-child(2) { letter-spacing: -.62px; }
.grid td:nth-child(3) { letter-spacing: -.65px; padding-right: 0; }
.grid td:nth-child(4), .grid td:nth-child(5) { letter-spacing: -.4px; }
.grid th { height: 20px; background: #fff; border-bottom: 0; }
.grid .ind { padding: 0; background: #f0f0f0; text-align: center; font-size: 10px; position: relative; }
.grid th.ind { background: #fff; }
.arrow { display: inline-block; border: 5px solid transparent; border-left: 5px solid #000; border-right: 0; vertical-align: middle; }
.grid .sel { background: #0a78d7; color: #fff; outline: 1px dotted #e89a5a; outline-offset: -1px; }
.grid .pg { padding: 0 0 0 2px; background: #fdf0ee; color: #e845c8; border-right: 0; }
.grid td.pg { background: linear-gradient(#0cb22f, #0cb22f) 2px 1px / 100% 15px no-repeat, #fdf0ee; text-indent: 8px; }
.hscroll { margin-top: auto; height: 16px; background: #f0f0f0; display: flex; align-items: center; flex: none; font-size: 16px; color: #444; }
.ha { width: 17px; text-align: center; flex: none; line-height: 14px; }
.hthumb { width: 422px; height: 15px; background: #c8c8c8; }
.ha:last-child { margin-left: auto; }

/* taskbars */
.taskbar { height: 40px; display: flex; align-items: center; flex: none; }
.tb-left { background-image: linear-gradient(90deg, #1e252e, #241f22 45%, #1b1b1f 100%); width: 1598px; }
.tb-right { background-image: linear-gradient(90deg, #222a34, #2b2b2b 30%, #2b2b2b 95%, #2b303a); }
.start { width: 48px; height: 40px; display: flex; align-items: center; justify-content: center; flex: none; }
.tk { width: 48.75px; height: 40px; display: flex; align-items: center; justify-content: center; position: relative; flex: none; }
.ti { width: 24px; height: 24px; }
.run::after { content: ""; position: absolute; left: 4px; right: 4px; bottom: 0; height: 2px; background: #76b9ed; }
.split::before { content: ""; position: absolute; right: 4px; width: 9px; bottom: 0; height: 2px; background: #5a86a8; z-index: 1; }
.hot { background: #383d47; }
.active { background: #4a4d55; }
.active::after, .hot::after { left: 0; right: 0; }
.tray { margin-left: auto; display: flex; align-items: center; height: 40px; color: #fff; }
.tr-ic { width: 16px; height: 16px; margin-right: 8px; fill: none; stroke: #fff; stroke-width: 1; flex: none; }
.tr-ic .solid { fill: #fff; }
.clock { display: flex; flex-direction: column; align-items: center; width: 70px; font-size: 12px; line-height: 17px; letter-spacing: -.1px; flex: none; }
.tr-ic + .clock { margin-left: 4px; }
.tr-note { width: 18px; height: 18px; margin-left: 11px; fill: none; stroke: #fff; stroke-width: 1; flex: none; }
.tr-end { width: 2px; height: 40px; margin-left: 19px; background: #6c6f74; flex: none; }

/* right window */
.right { width: 1366px; display: flex; flex-direction: column; }
.browser { height: 728px; background: #fff; position: relative; display: flex; flex-direction: column; flex: none; }
.tabstrip { height: 34px; background: #e7eaed; display: flex; align-items: center; padding-left: 9px; flex: none; position: relative; }
.tab { width: 72.9px; height: 34px; display: flex; align-items: center; padding-left: 6px; gap: 9px; border-right: 1px solid #8c8f93; position: relative; flex: none; font-size: 12px; color: #555; border-image: linear-gradient(transparent 8px, #8c8f93 8px, #8c8f93 26px, transparent 26px) 1; }
.fav { width: 16px; height: 16px; flex: none; }
.tname { width: 38px; overflow: hidden; white-space: nowrap; -webkit-mask-image: linear-gradient(90deg, #000 60%, transparent); mask-image: linear-gradient(90deg, #000 60%, transparent); }
.tab-on { background: #fff; border: 0; border-radius: 9px 9px 0 0; border-image: none; gap: 7px; }
.tab-on .tname { width: 15px; }
.tx { width: 9px; height: 9px; margin-left: 8px; fill: none; stroke: #444; stroke-width: 1.6; flex: none; }
.tplus { width: 14px; height: 14px; margin-left: 16px; fill: none; stroke: #555; stroke-width: 1.8; flex: none; }
.chrome-ctrl { margin-left: auto; display: flex; gap: 32px; padding-right: 16px; }
.navbar { height: 37px; background: #fff; display: flex; align-items: center; padding-left: 13px; flex: none; }
.nav-ic { width: 16px; height: 16px; margin-right: 18px; fill: none; stroke: #5f6368; stroke-width: 2; flex: none; }
.nav-ic.off { stroke: #b8babd; }
.omni { width: 1117px; height: 28px; border-radius: 14px; background: #f1f3f4; display: flex; align-items: center; padding-left: 13px; margin-left: -1px; flex: none; }
.lock { width: 11px; height: 13px; fill: none; stroke: #5f6368; stroke-width: 1.600; flex: none; }
.lock .solid { fill: #5f6368; }
.url { margin-left: 7px; font: 400 14px Roboto, sans-serif; color: #303134; }
.omni-ic { width: 15px; height: 15px; fill: none; stroke: #5f6368; stroke-width: 1.300; margin-left: 17px; flex: none; }
.url + .omni-ic { margin-left: auto; }
.omni > .omni-ic:last-child { margin-right: 10px; }
.puzzle { width: 15px; height: 15px; margin-left: 14px; fill: #5f6368; flex: none; }
.page { position: relative; flex: 1; overflow: hidden; }
.newsletter { position: relative; z-index: 2; height: 48px; width: 1349px; background: #247544; display: flex; align-items: center; padding-left: 429px; }
.nl-input { width: 300px; height: 37px; border: 1px solid #ddd; border-radius: 4px 0 0 4px; padding: 0 6px; font: 16px "Liberation Sans", sans-serif; background: #fff; margin: 0; }
.nl-input::placeholder { color: #777; }
.nl-btn { width: 209px; height: 37px; margin-left: -4px; border: 0; border-radius: 4px; background: #fe3a0e; color: #fff; font: 16px "Liberation Sans", sans-serif; padding: 0; position: relative; }
.article { width: 1079px; margin: -2px 0 0 135px; font: 300 20px/34px Roboto, sans-serif; color: #555; text-align: justify; }
.article p { margin: 0 0 20px; }
.article b { font-weight: 500; color: #333; }
.article ol { margin: 0 0 10px; padding-left: 40px; }
.article ul { margin: 0; padding-left: 40px; }
.share { position: absolute; left: 8px; top: 108px; display: flex; flex-direction: column; gap: 8px; z-index: 1; }
.sb { width: 44px; height: 44px; border-radius: 5px; display: flex; align-items: center; justify-content: center; }
.sb svg { width: 33px; height: 33px; fill: #fff; }
.b-in { background: #007bb5; }
.b-tw { background: #1da1f2; }
.b-wa { background: #12af0a; }
.b-tg { background: #2ca5e0; }
.b-fb { background: #1877f2; }
.b-ml { background: #0166ff; }
.next { position: absolute; left: 1324px; top: 319px; width: 14px; height: 24px; fill: none; stroke: #4a4a4a; stroke-width: 2.400; }
.ibeam { position: absolute; left: 352px; top: 445px; width: 1px; height: 14px; background: #444; }
.vscroll { position: absolute; right: 0; top: 0; bottom: 0; width: 17px; background: #f1f1f1; z-index: 1; }
.vup { position: absolute; left: 5px; top: 6px; width: 0; height: 0; border: 4px solid transparent; border-top: 0; border-bottom: 5px solid #505050; }
.vthumb { position: absolute; left: 2px; top: 107px; width: 13px; height: 42px; background: #c1c1c1; }
.recorder { position: absolute; left: 1254px; top: 24px; width: 97px; height: 40px; background: #1f2533; border: 1px solid #566477; display: flex; align-items: center; padding-left: 5px; z-index: 5; }
.rec-logo { width: 29px; height: 29px; flex: none; }
.rec-sep { width: 1px; height: 33px; background: #66707e; margin: 0 9px 0 5px; flex: none; }
.rec-pause { width: 16px; height: 15px; border-left: 6px solid #0aa5ff; border-right: 6px solid #0aa5ff; flex: none; }
.rec-stop { width: 16px; height: 15px; margin-left: 9px; background: #0aa5ff; flex: none; }
.rec-tip { position: absolute; left: 1161px; top: 68px; width: 188px; height: 39px; background: #1f2533; border: 1px solid #6b7b90; color: #d8dde4; font-size: 11px; letter-spacing: -.3px; display: flex; flex-direction: column; text-align: right; padding: 3px 0 0 3px; z-index: 5; white-space: nowrap; }
.rec-tip::before { content: ""; position: absolute; right: -3px; top: -7px; border: 4px solid transparent; border-top: 0; border-bottom: 7px solid #6b7b90; }
.tip-head { line-height: 14px; height: 16px; padding-right: 1px; border-bottom: 1px solid #8a94a2; }
.tip-body { line-height: 17px; padding-right: 1px; }
```
